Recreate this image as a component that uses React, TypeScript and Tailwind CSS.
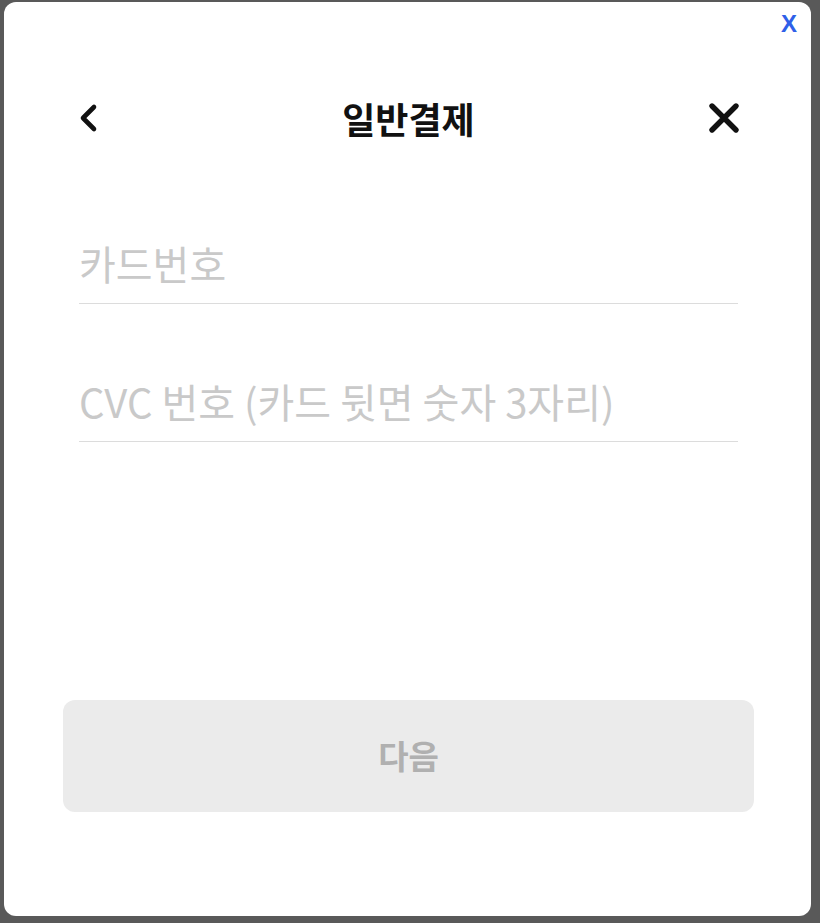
import React from "react";

const KR = "font-['Noto_Sans_CJK_KR','Noto_Sans',sans-serif]";

function BackIcon() {
  return (
    <svg width="26" height="32" viewBox="0 0 26 32" fill="none">
      <path
        d="M18 5 L7 16 L18 27"
        stroke="#111"
        strokeWidth="4.6"
        strokeLinecap="round"
        strokeLinejoin="round"
      />
    </svg>
  );
}

function CloseIcon() {
  return (
    <svg width="34" height="34" viewBox="0 0 34 34" fill="none">
      <path
        d="M5 5 L29 29 M29 5 L5 29"
        stroke="#111"
        strokeWidth="5.4"
        strokeLinecap="round"
      />
    </svg>
  );
}

function Field({ placeholder }: { placeholder: string }) {
  return (
    <input
      type="text"
      placeholder={placeholder}
      className={`w-full border-b border-[#dcdcdc] bg-transparent pb-[14px] text-[40px] leading-[52px] text-[#222] placeholder-[#c9c9c9] outline-none ${KR}`}
    />
  );
}

export default function App() {
  return (
    <div className="relative h-[923px] w-[820px] overflow-hidden bg-[#595959]">
      <div className="ml-[4px] mt-[2px] flex h-[914px] w-[807px] flex-col rounded-[12px] bg-white">
        <div className="flex h-[36px] justify-end pr-[14px] pt-[8px]">
          <span className="font-['Liberation_Sans',sans-serif] text-[24px] font-bold leading-[28px] text-[#2f5fe8]">
            X
          </span>
        </div>
        <div className="mt-[60px] grid h-[40px] grid-cols-[1fr_auto_1fr] items-center pl-[72px] pr-[70px]">
          <div className="flex justify-start">
            <BackIcon />
          </div>
          <h1 className={`text-[36px] font-bold leading-[40px] text-[#111] ${KR}`}>
            일반결제
          </h1>
          <div className="flex justify-end">
            <CloseIcon />
          </div>
        </div>
        <div className="mt-[99px] flex flex-col gap-[71px] pl-[75px] pr-[73px]">
          <Field placeholder="카드번호" />
          <Field placeholder="CVC 번호 (카드 뒷면 숫자 3자리)" />
        </div>
        <div className="mt-auto px-[57px] pb-[104px] pl-[59px]">
          <button
            type="button"
            className={`flex h-[112px] w-full items-center justify-center rounded-[12px] bg-[#ebebeb] text-[33px] font-bold text-[#b0b0b0] ${KR}`}
          >
            다음
          </button>
        </div>
      </div>
    </div>
  );
}
